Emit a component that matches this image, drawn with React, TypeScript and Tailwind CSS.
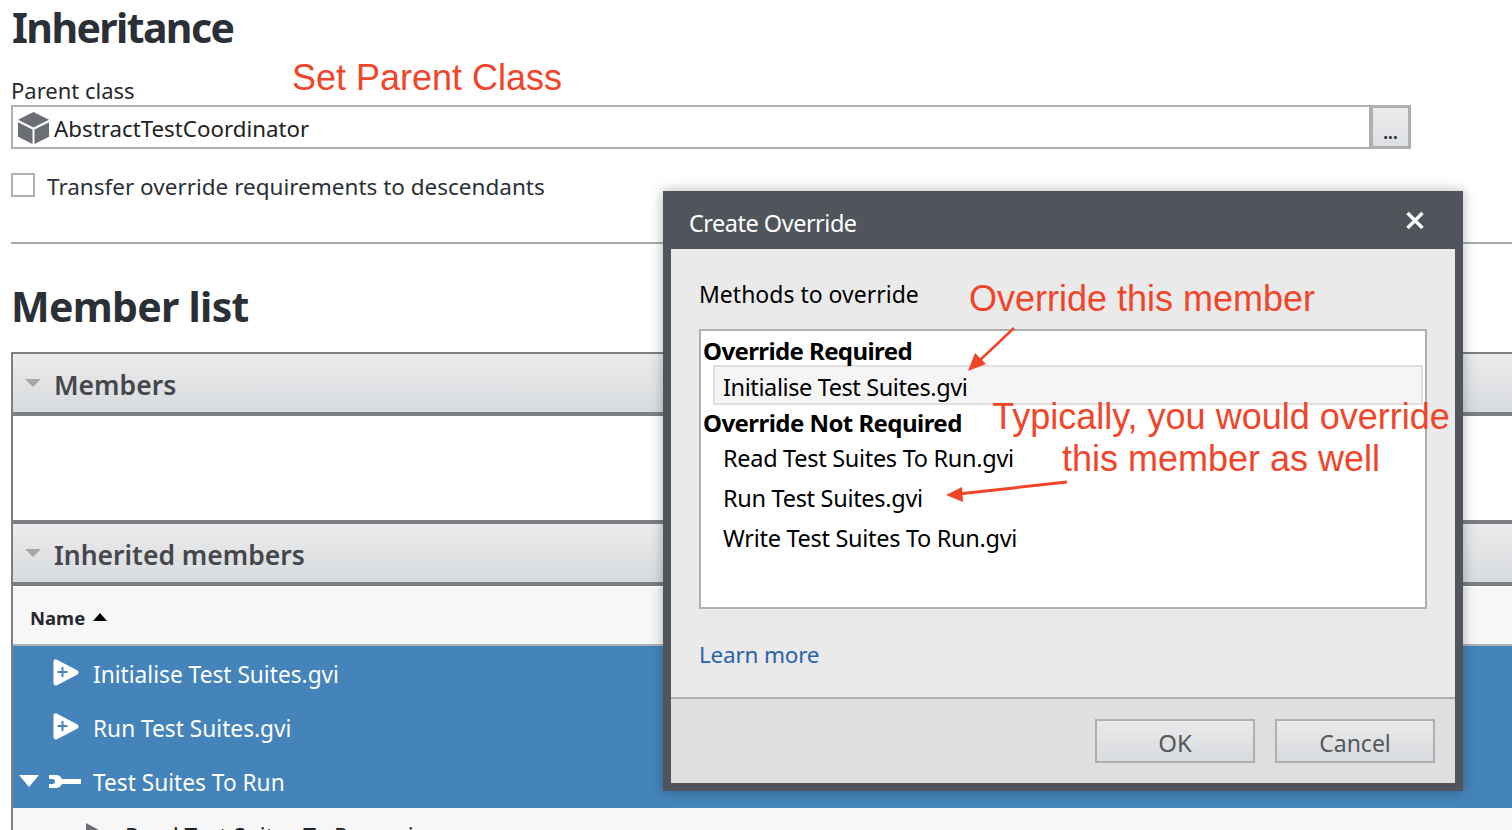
const ui = "font-['Noto_Sans',sans-serif]";
const note = "font-['Liberation_Sans',sans-serif] text-[#f1452a]";

function Cube() {
  return (
    <svg width="33" height="33" viewBox="0 0 34 34" className="shrink-0">
      <path d="M17 1 L33 9 L17 17 L1 9 Z" fill="#6b6e74" />
      <path d="M1 11.5 L16 19 V34 L1 26.5 Z" fill="#6b6e74" />
      <path d="M33 11.5 L18 19 V34 L33 26.5 Z" fill="#6b6e74" />
    </svg>
  );
}

function VI() {
  return (
    <svg width="26" height="27" viewBox="0 0 26 27" className="shrink-0 -mt-[2px]">
      <path d="M3.5 0.4 Q0.5 0 0.5 3 V24 Q0.5 27 3.5 26.5 L24.5 15.5 Q26.5 13.5 24.5 11.5 Z" fill="#fff" />
      <path d="M9.5 8 V18 M4.5 13 H14.5" stroke="#4484ba" strokeWidth="2" />
    </svg>
  );
}

function Wrench() {
  return (
    <svg width="32" height="15" viewBox="0 0 32 15" className="shrink-0">
      <path
        d="M0 1 H7 Q11 1 13 5 H32 V10 H13 Q11 14 7 14 H0 V10 H4 Q6 9.5 6 7.5 Q6 5.5 4 5 H0 Z"
        fill="#fff"
      />
    </svg>
  );
}

function PanelHeader({ title }: { title: string }) {
  return (
    <div className="h-[58px] flex items-center bg-gradient-to-b from-[#eaebec] to-[#d8dbde] border-b-4 border-[#7c7e82] box-content">
      <div className="ml-[12px] w-0 h-0 border-x-[8px] border-x-transparent border-t-[8px] border-t-[#a5a7aa]" />
      <span className="ml-[13px] mt-[6px] text-[26.5px] font-semibold text-[#45474b]">{title}</span>
    </div>
  );
}

function DialogRow({ label }: { label: string }) {
  return <div className="h-[40px] flex items-center pl-[20px] pb-[4px] text-[23.5px] text-black tracking-[-0.3px]">{label}</div>;
}

export default function App() {
  return (
    <div className={`relative w-[1512px] h-[830px] overflow-hidden bg-white ${ui}`}>
      {/* Page */}
      <div className="pl-[11px] flex flex-col">
        <h1 className="h-[54px] ml-[1px] flex items-center text-[41px] leading-[54px] font-bold text-[#2b3036] tracking-[-1.6px]">Inheritance</h1>
        <div className="h-[51px] pt-[21px] text-[22px] text-[#26292d] leading-[30px]">Parent class</div>

        <div className="flex w-[1400px] h-[44px]">
          <div className="flex-1 flex items-center gap-[4px] pl-[4px] border-2 border-[#adafb2]">
            <Cube />
            <span className="mt-[4px] text-[22.3px] text-[#222]">AbstractTestCoordinator</span>
          </div>
          <div className="w-[40px] flex items-end justify-center border-[3px] border-[#adafb2] border-l-2 bg-gradient-to-b from-[#ebebec] to-[#dcdfe2] text-[17px] leading-[26px] text-[#333] font-bold">
            ...
          </div>
        </div>

        <div className="mt-[24px] flex items-center h-[24px] gap-[12px]">
          <div className="w-[24px] h-[24px] border-2 border-[#adafb2] bg-white" />
          <span className="mt-[4px] text-[22.5px] text-[#2b3036]">Transfer override requirements to descendants</span>
        </div>

        <div className="mt-[45px] h-[2px] bg-[#a8a9ab]" />

        <h2 className="mt-[34px] h-[56px] flex items-center text-[41px] leading-[56px] font-bold text-[#2b3036] tracking-[-0.7px]">Member list</h2>

        {/* Members panels */}
        <div className="mt-[18px] border-l-2 border-t-2 border-[#7c7e82]">
          <PanelHeader title="Members" />
          <div className="h-[104px] bg-white" />
          <div className="h-[4px] bg-[#7c7e82]" />
          <PanelHeader title="Inherited members" />
          <div className="h-[2px] bg-white" />
          <div className="h-[56px] flex items-center gap-[8px] pl-[17px] bg-[#f7f7f7] border-b-2 border-[#adafb2] box-content">
            <span className="mt-[4px] text-[18.5px] font-bold text-[#26292d]">Name</span>
            <div className="w-0 h-0 border-x-[7px] border-x-transparent border-b-[8px] border-b-black mt-[2px]" />
          </div>

          <div className="bg-[#4484ba] text-white text-[22.7px]">
            <div className="h-[54px] flex items-center gap-[14px] pl-[40px]">
              <VI />
              <span className="mt-[4px]">Initialise Test Suites.gvi</span>
            </div>
            <div className="h-[54px] flex items-center gap-[14px] pl-[40px]">
              <VI />
              <span className="mt-[4px]">Run Test Suites.gvi</span>
            </div>
            <div className="h-[54px] flex items-center pl-[6px]">
              <div className="w-0 h-0 border-x-[10px] border-x-transparent border-t-[12px] border-t-white" />
              <div className="ml-[10px]">
                <Wrench />
              </div>
              <span className="ml-[12px] mt-[4px]">Test Suites To Run</span>
            </div>
          </div>

          <div className="h-[54px] flex items-start pt-[14px] pl-[72px] bg-[#f7f7f7] text-[22.7px] leading-[30px] text-[#222]">
            <svg width="24" height="26" viewBox="0 0 24 26" className="shrink-0">
              <path d="M1 1 V25 L23 13 Z" fill="#6b6e74" />
            </svg>
            <span className="ml-[16px]">Read Test Suites To Run.gvi</span>
          </div>
        </div>
      </div>

      {/* Dialog */}
      <div className="absolute left-[663px] top-[191px] w-[800px] h-[600px] flex flex-col border-x-[8px] border-b-[8px] border-[#50545b] bg-[#eaeaea] shadow-[0_0_12px_rgba(0,0,0,0.3)]">
        <div className="h-[58px] -mx-[8px] px-[26px] flex items-center justify-between bg-[#50545b] text-white">
          <span className="text-[23.5px] tracking-[-0.5px] mt-[8px]">Create Override</span>
          <svg width="20" height="19" viewBox="0 0 20 19" className="mr-[12px]">
            <path d="M2.5 2 L17.5 17 M17.5 2 L2.5 17" stroke="#fff" strokeWidth="3.4" />
          </svg>
        </div>

        <div className="flex-1 flex flex-col px-[28px]">
          <div className="mt-[25px] h-[40px] flex items-center text-[23px] text-black">Methods to override</div>
          <div className="mt-[15px] w-[728px] h-[280px] border-2 border-[#adafb2] bg-white px-[2px]">
            <div className="h-[34px] pt-[6px] flex items-center text-[24px] font-bold text-black tracking-[-0.6px]">Override Required</div>
            <div className="ml-[10px] h-[40px] flex items-center pl-[8px] pt-[5px] border-2 border-[#e0e0e0] bg-[#f5f5f5] text-[23.5px] text-black tracking-[-0.4px]">
              Initialise Test Suites.gvi
            </div>
            <div className="h-[36px] flex items-center text-[24px] font-bold text-black tracking-[-0.55px]">Override Not Required</div>
            <DialogRow label="Read Test Suites To Run.gvi" />
            <DialogRow label="Run Test Suites.gvi" />
            <DialogRow label="Write Test Suites To Run.gvi" />
          </div>
          <a className="mt-[29px] text-[22.5px] leading-[34px] text-[#2a63ac] tracking-[-0.2px]">Learn more</a>
        </div>

        <div className="h-[86px] flex items-center justify-end gap-[20px] pr-[20px] bg-[#dfdfdf] border-t-2 border-[#adafb2]">
          <button className="w-[160px] h-[44px] pt-[4px] border-2 border-[#adafb2] bg-gradient-to-b from-[#e9eaeb] to-[#d8dbde] text-[24px] text-[#55585c]">OK</button>
          <button className="w-[160px] h-[44px] pt-[4px] border-2 border-[#adafb2] bg-gradient-to-b from-[#e9eaeb] to-[#d8dbde] text-[23px] text-[#55585c]">Cancel</button>
        </div>
      </div>

      {/* Annotations */}
      <span className={`absolute left-[292px] top-[57px] text-[36px] leading-[42px] whitespace-nowrap ${note}`}>Set Parent Class</span>
      <span className={`absolute left-[969px] top-[278px] text-[36px] leading-[42px] whitespace-nowrap ${note}`}>Override this member</span>
      <div className={`absolute left-[990px] top-[396px] w-[462px] text-center text-[36px] leading-[42px] whitespace-nowrap ${note}`}>
        <div>Typically, you would override</div>
        <div>this member as well</div>
      </div>
      <svg width="1512" height="830" viewBox="0 0 1512 830" className="absolute left-0 top-0 pointer-events-none">
        <path d="M1014 328 L978 362" stroke="#f1452a" strokeWidth="2.5" />
        <path d="M968 371 L975 353 L986 364 Z" fill="#f1452a" />
        <path d="M1067 482 L958 494" stroke="#f1452a" strokeWidth="3" />
        <path d="M946 495 L962 487 L963 502 Z" fill="#f1452a" />
      </svg>
    </div>
  );
}
